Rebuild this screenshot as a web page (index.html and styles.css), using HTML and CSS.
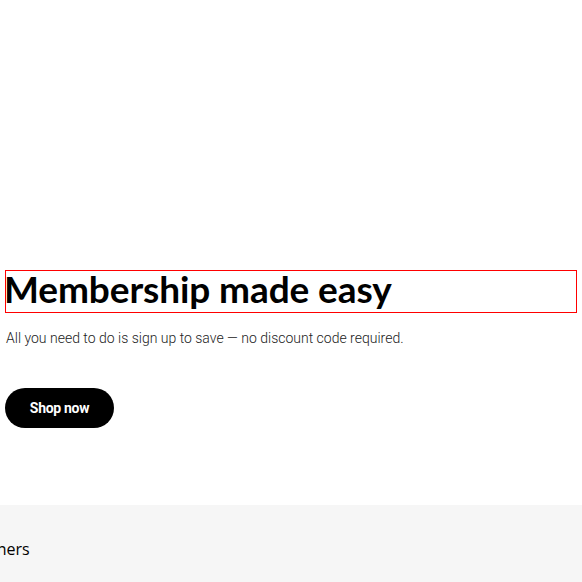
FILE: index.html
```html
<!DOCTYPE html>
<html>
<head>
<meta charset="utf-8">
<link rel="stylesheet" href="styles.css">
</head>
<body>
<section class="hero">
  <h1 class="title">Membership made easy</h1>
  <p class="desc">All you need to do is sign up to save — no discount code required.</p>
  <a class="btn" href="#">Shop now</a>
</section>
<section class="band">
  <div class="band-text">Partners</div>
</section>
</body>
</html>
```
FILE: styles.css
```css
html, body {
  margin: 0;
  padding: 0;
  background: #fff;
}
body {
  width: 582px;
  height: 582px;
  overflow: hidden;
  font-family: "Roboto", "Liberation Sans", sans-serif;
}
.hero {
  padding: 270px 5px 0 5px;
  height: 505px;
  box-sizing: border-box;
}
.title {
  margin: 0;
  border: 1px solid #ff0000;
  font-family: "Lato", "DejaVu Sans", sans-serif;
  font-weight: 700;
  font-size: 37px;
  line-height: 36px;
  padding-bottom: 5px;
  color: #000;
  letter-spacing: -0.1px;
  text-indent: -2px;
}
.desc {
  margin: 16px 0 0 1px;
  font-family: "Roboto", sans-serif;
  font-size: 14px;
  font-weight: 300;
  color: #222;
  line-height: 18px;
  letter-spacing: 0;
}
.btn {
  display: inline-flex;
  align-items: center;
  justify-content: center;
  margin-top: 41px;
  width: 109px;
  height: 40px;
  border-radius: 20px;
  background: #000;
  color: #fff;
  font-family: "Roboto", sans-serif;
  font-weight: 700;
  font-size: 14px;
  text-decoration: none;
  letter-spacing: -0.3px;
}
.band {
  background: #f6f6f6;
  height: 77px;
  display: flex;
  align-items: center;
}
.band-text {
  margin-left: -34px;
  margin-top: 10px;
  font-family: "Open Sans", sans-serif;
  font-size: 16px;
  color: #000;
}
```
